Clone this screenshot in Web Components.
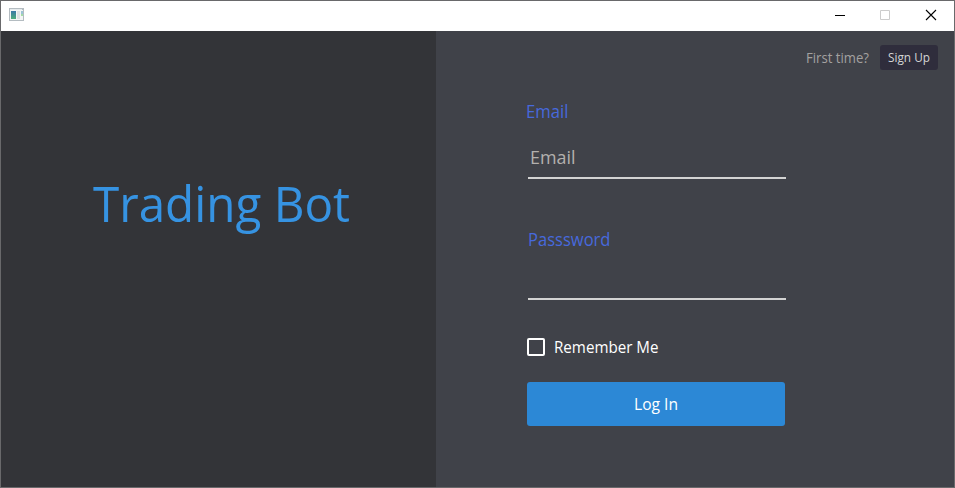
<!DOCTYPE html>
<html lang="en"><head><meta charset="utf-8"><title>Trading Bot</title>
<style>
html,body{margin:0;height:100%;overflow:hidden}
body{font-family:"Open Sans","Noto Sans",sans-serif}
</style></head><body><trading-app></trading-app>
<script>
// Single-line text condensed or widened to the width in its "w" attribute.
class FitText extends HTMLElement{
  connectedCallback(){
    const r=this.attachShadow({mode:'open'});
    r.innerHTML='<style>:host{display:block;white-space:nowrap;flex:none}span{display:inline-block;transform-origin:0 50%}</style><span><slot></slot></span>';
    const s=r.querySelector('span'),w=+this.getAttribute('w');
    const n=s.getBoundingClientRect().width;
    this.style.width=w+'px';
    if(n)s.style.transform=`scaleX(${w/n})`;
  }
}
class TitleBar extends HTMLElement{
  connectedCallback(){
    this.attachShadow({mode:'open'}).innerHTML=`<style>
:host{display:flex;height:30px;background:#fff;justify-content:space-between}
svg{display:block}.i{padding:7px 0 0 8px}.c{display:flex}.c svg{width:45px;height:30px}</style>
<svg class="i" width="16" height="14" viewBox="0 0 16 14" shape-rendering="crispEdges">
<defs><linearGradient id="g" x2="0" y2="1"><stop stop-color="#3b78a8"/><stop offset="1" stop-color="#4fae7c"/></linearGradient></defs>
<path d="M0 0h15v13H0z" fill="#b4bcc1"/><path d="M1 1h12v1H1z" fill="#e6ebed"/><path d="M1 2h13v10H1z" fill="#f4f6f6"/>
<path d="M2 3h5v8H2z" fill="url(#g)"/><path d="M8 3h3v8H8z" fill="#dfe2e3"/><path d="M12 3h2v3h-2z" fill="#9bc3d6"/><path d="M12 6h2v2h-2z" fill="#a3dba7"/></svg>
<div class="c"><svg viewBox="0 0 45 30"><path d="M16 14.5h10" stroke="#000"/></svg>
<svg viewBox="0 0 45 30"><path d="M16.5 9.5h9v9h-9z" fill="none" stroke="#ccc"/></svg>
<svg viewBox="0 0 45 30"><path d="M17 9l10 10M27 9l-10 10" stroke="#000" stroke-width="1.1"/></svg></div>`;
  }
}
class BrandPanel extends HTMLElement{
  connectedCallback(){
    this.attachShadow({mode:'open'}).innerHTML=`<style>
:host{display:block;box-sizing:border-box;background:#333438;padding:137px 0 0 92px;color:#3693e2;font-size:50px;line-height:70px}</style>
<fit-text w="257">Trading Bot</fit-text>`;
  }
}
class TextField extends HTMLElement{
  connectedCallback(){
    this.attachShadow({mode:'open'}).innerHTML=`<style>
:host{display:block;font-size:18px;line-height:24px}
.l{color:#4769dc}.f{height:56px;box-sizing:border-box;margin-left:2px;border-bottom:2px solid #d3d3d3;padding:22px 0 0 2px;color:#b3b0ae}
:host([tall]) .f{height:49px}:host([tall]) .l{padding-left:2px}</style>
<div class="l"><slot name="label"></slot></div><div class="f"><slot></slot></div>`;
  }
}
class CheckRow extends HTMLElement{
  connectedCallback(){
    this.attachShadow({mode:'open'}).innerHTML=`<style>
:host{display:flex;align-items:center;height:22px;gap:9px;color:#fff;font-size:16px;line-height:22px}
i{box-sizing:border-box;width:18px;height:18px;border:2px solid #fff;border-radius:2px}</style><i></i><slot></slot>`;
  }
}
class PushButton extends HTMLElement{
  connectedCallback(){
    this.attachShadow({mode:'open'}).innerHTML=`<style>
:host{display:flex;align-items:center;justify-content:center;box-sizing:border-box;border-radius:3px;background:#2c88d6;color:#fff}
:host([small]){background:#2f2d3c;color:#d4d4d4;width:58px;height:25px;font-size:12.5px;line-height:17px}
:host(:not([small])){height:44px;font-size:16px;line-height:22px}</style><slot></slot>`;
  }
}
class LoginPanel extends HTMLElement{
  connectedCallback(){
    this.attachShadow({mode:'open'}).innerHTML=`<style>
:host{display:block;background:#404249}
header{display:flex;justify-content:flex-end;align-items:center;height:25px;padding:14px 16px 0 0;gap:11px;color:#a3a1a0;font-size:14px;line-height:21px}
main{width:260px;padding:29px 0 0 90px}
text-field+text-field{margin-top:48px}
check-row{margin:36px 0 0 1px}push-button.go{margin:24px 1px 0 1px}</style>
<header><fit-text w="63">First time?</fit-text><push-button small><fit-text w="42">Sign Up</fit-text></push-button></header>
<main><text-field><fit-text slot="label" w="42.5">Email</fit-text><fit-text w="45.5">Email</fit-text></text-field>
<text-field tall><fit-text slot="label" w="82.5">Passsword</fit-text></text-field>
<check-row><fit-text w="104.5">Remember Me</fit-text></check-row>
<push-button class="go"><fit-text w="44">Log In</fit-text></push-button></main>`;
  }
}
class TradingApp extends HTMLElement{
  connectedCallback(){
    this.attachShadow({mode:'open'}).innerHTML=`<style>
:host{display:flex;flex-direction:column;box-sizing:border-box;width:955px;height:488px;border:1px solid #69696b}
.b{flex:1;display:grid;grid-template-columns:435px 1fr}</style>
<title-bar></title-bar><div class="b"><brand-panel></brand-panel><login-panel></login-panel></div>`;
  }
}
customElements.define('trading-app',TradingApp);
customElements.define('title-bar',TitleBar);
customElements.define('brand-panel',BrandPanel);
customElements.define('login-panel',LoginPanel);
customElements.define('text-field',TextField);
customElements.define('check-row',CheckRow);
customElements.define('push-button',PushButton);
customElements.define('fit-text',FitText);
</script></body></html>
